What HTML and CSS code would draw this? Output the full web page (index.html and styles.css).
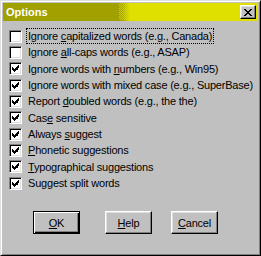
FILE: index.html
```html
<!DOCTYPE html>
<html>
<head>
<meta charset="utf-8">
<link rel="stylesheet" href="styles.css">
</head>
<body>
<div class="window">
  <div class="titlebar">
    <span class="title">Options</span>
    <span class="close">
      <svg width="8" height="7" viewBox="0 0 8 7" shape-rendering="crispEdges"><path fill="#000" d="M0 0h2v1h-2zM6 0h2v1h-2zM1 1h2v1h-2zM5 1h2v1h-2zM2 2h4v1h-4zM3 3h2v1h-2zM2 4h4v1h-4zM1 5h2v1h-2zM5 5h2v1h-2zM0 6h2v1h-2zM6 6h2v1h-2z"/></svg>
    </span>
  </div>
  <div class="list">
    <div class="row"><span class="box"></span><span class="label focus">Ignore <u>c</u>apitalized words (e.g., Canada)</span></div>
    <div class="row"><span class="box"></span><span class="label">Ignore <u>a</u>ll-caps words (e.g., ASAP)</span></div>
    <div class="row"><span class="box checked"><svg width="7" height="7" viewBox="0 0 7 7" shape-rendering="crispEdges"><path d="M6 0h1v3h-1zM5 1h1v4h-1zM4 2h1v3h-1zM3 3h1v3h-1zM2 4h1v3h-1zM1 3h1v3h-1zM0 2h1v3h-1z"/></svg></span><span class="label">Ignore words with <u>n</u>umbers (e.g., Win95)</span></div>
    <div class="row"><span class="box checked"><svg width="7" height="7" viewBox="0 0 7 7" shape-rendering="crispEdges"><path d="M6 0h1v3h-1zM5 1h1v4h-1zM4 2h1v3h-1zM3 3h1v3h-1zM2 4h1v3h-1zM1 3h1v3h-1zM0 2h1v3h-1z"/></svg></span><span class="label">Ignore words with mixed case (e.g., SuperBase)</span></div>
    <div class="row"><span class="box checked"><svg width="7" height="7" viewBox="0 0 7 7" shape-rendering="crispEdges"><path d="M6 0h1v3h-1zM5 1h1v4h-1zM4 2h1v3h-1zM3 3h1v3h-1zM2 4h1v3h-1zM1 3h1v3h-1zM0 2h1v3h-1z"/></svg></span><span class="label">Report <u>d</u>oubled words (e.g., the the)</span></div>
    <div class="row"><span class="box checked"><svg width="7" height="7" viewBox="0 0 7 7" shape-rendering="crispEdges"><path d="M6 0h1v3h-1zM5 1h1v4h-1zM4 2h1v3h-1zM3 3h1v3h-1zM2 4h1v3h-1zM1 3h1v3h-1zM0 2h1v3h-1z"/></svg></span><span class="label">Cas<u>e</u> sensitive</span></div>
    <div class="row"><span class="box checked"><svg width="7" height="7" viewBox="0 0 7 7" shape-rendering="crispEdges"><path d="M6 0h1v3h-1zM5 1h1v4h-1zM4 2h1v3h-1zM3 3h1v3h-1zM2 4h1v3h-1zM1 3h1v3h-1zM0 2h1v3h-1z"/></svg></span><span class="label">Always <u>s</u>uggest</span></div>
    <div class="row"><span class="box checked"><svg width="7" height="7" viewBox="0 0 7 7" shape-rendering="crispEdges"><path d="M6 0h1v3h-1zM5 1h1v4h-1zM4 2h1v3h-1zM3 3h1v3h-1zM2 4h1v3h-1zM1 3h1v3h-1zM0 2h1v3h-1z"/></svg></span><span class="label"><u>P</u>honetic suggestions</span></div>
    <div class="row"><span class="box checked"><svg width="7" height="7" viewBox="0 0 7 7" shape-rendering="crispEdges"><path d="M6 0h1v3h-1zM5 1h1v4h-1zM4 2h1v3h-1zM3 3h1v3h-1zM2 4h1v3h-1zM1 3h1v3h-1zM0 2h1v3h-1z"/></svg></span><span class="label"><u>T</u>ypographical suggestions</span></div>
    <div class="row"><span class="box checked"><svg width="7" height="7" viewBox="0 0 7 7" shape-rendering="crispEdges"><path d="M6 0h1v3h-1zM5 1h1v4h-1zM4 2h1v3h-1zM3 3h1v3h-1zM2 4h1v3h-1zM1 3h1v3h-1zM0 2h1v3h-1z"/></svg></span><span class="label">Suggest split words</span></div>
  </div>
  <div class="buttons">
    <button class="btn default"><u>O</u>K</button>
    <button class="btn"><u>H</u>elp</button>
    <button class="btn"><u>C</u>ancel</button>
  </div>
</div>
</body>
</html>
```
FILE: styles.css
```css
html, body {
  margin: 0;
  padding: 0;
  background: #c0c0c0;
}
.window {
  position: relative;
  width: 261px;
  height: 256px;
  box-sizing: border-box;
  background: #c0c0c0;
  border: 1px solid;
  border-color: #dfdfdf #000 #000 #dfdfdf;
  box-shadow: inset 1px 1px #fff, inset -1px -1px #808080;
  padding: 2px;
  font-family: "Liberation Sans", Arial, sans-serif;
  font-size: 11px;
  letter-spacing: -0.2px;
  color: #000;
}
.titlebar {
  position: relative;
  height: 18px;
  display: flex;
  align-items: center;
  justify-content: space-between;
  background: linear-gradient(to right, #a0a000 0, #a0a000 119px, #e0e000 127px, #e0e000 100%);
  padding: 0 2px 0 3px;
}
.titlebar::after {
  content: "";
  position: absolute;
  left: 116px;
  top: 0;
  width: 12px;
  height: 17px;
  background-image: conic-gradient(#e0e000 25%, transparent 0 50%, #e0e000 0 75%, transparent 0);
  background-size: 2px 2px;
  opacity: 0.7;
}
.title {
  position: relative;
  z-index: 1;
  color: #fff;
  font-weight: bold;
  letter-spacing: 0;
}
.close {
  position: relative;
  z-index: 1;
  width: 16px;
  height: 14px;
  box-sizing: border-box;
  background: #c0c0c0;
  border: 1px solid;
  border-color: #fff #000 #000 #fff;
  box-shadow: inset -1px -1px #808080, inset 1px 1px #dfdfdf;
  display: flex;
  align-items: center;
  justify-content: center;
}
.close svg { display: block; margin-left: -1px; }
.list {
  padding: 7px 0 0 6px;
}
.row {
  height: 16.33px;
  display: flex;
  align-items: center;
}
.box {
  width: 13px;
  height: 13px;
  box-sizing: border-box;
  background: #fff;
  border: 1px solid;
  border-color: #808080 #fff #fff #808080;
  box-shadow: inset 1px 1px #000, inset -1px -1px #dfdfdf;
  display: flex;
  padding: 2px 0 0 2px;
  flex: none;
}
.box svg { display: block; }
.label {
  margin-left: 4px;
  padding: 0 1px;
  height: 16px;
  line-height: 15px;
  box-sizing: border-box;
  border: 1px solid transparent;
  white-space: nowrap;
}
.focus {
  border: 1px dotted #000;
}
.buttons {
  display: flex;
  gap: 19px;
  margin-top: 20px;
  padding-left: 30px;
}
.btn {
  width: 47px;
  height: 23px;
  box-sizing: border-box;
  background: #c0c0c0;
  border: 1px solid;
  border-color: #fff #000 #000 #fff;
  box-shadow: inset -1px -1px #808080, inset 1px 1px #dfdfdf;
  font-family: "Liberation Sans", Arial, sans-serif;
  font-size: 11px;
  letter-spacing: -0.2px;
  color: #000;
  padding: 0;
  margin: 0;
}
.btn.default {
  border: 1px solid #000;
  box-shadow: inset 1px 1px #fff, inset -1px -1px #000, inset -2px -2px #808080;
  margin-right: 6px;
}
```
